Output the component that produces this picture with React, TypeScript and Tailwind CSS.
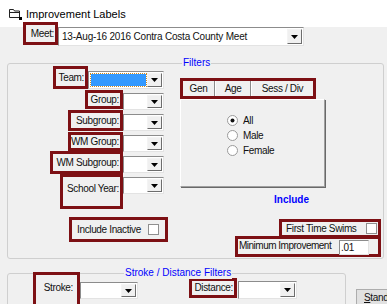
import React from "react";

const RED = "border-[3px] border-[#7d1014] bg-[#f0f0f0] whitespace-nowrap";

function Arrow() {
  return (
    <svg width="7" height="4" viewBox="0 0 7 4">
      <polygon points="0,0 7,0 3.5,4" fill="#000" />
    </svg>
  );
}

function Combo({
  className = "",
  text = "",
  selected = false,
}: {
  className?: string;
  text?: string;
  selected?: boolean;
}) {
  return (
    <div
      className={`flex shrink-0 bg-white border border-t-[#8c8c8c] border-l-[#8c8c8c] border-r-[#e3e3e3] border-b-[#e3e3e3] p-[1px] ${className}`}
    >
      <div className="flex-1 min-w-0 flex items-center overflow-hidden">
        {selected ? (
          <div className="w-full h-full p-[1px]">
            <div className="h-full bg-[#3399ff] outline-1 outline-dotted outline-[#d08a20]" />
          </div>
        ) : (
          <span className="pl-[2px] whitespace-nowrap">{text}</span>
        )}
      </div>
      <div className="w-[15px] shrink-0 bg-[#f0f0f0] border border-t-[#f4f4f4] border-l-[#f4f4f4] border-r-[#6d6d6d] border-b-[#6d6d6d] flex items-center justify-center">
        <Arrow />
      </div>
    </div>
  );
}

function Check({ className = "" }: { className?: string }) {
  return (
    <div
      className={`w-[11px] h-[11px] shrink-0 bg-white border border-[#8f8f8f] ${className}`}
    />
  );
}

function Radio({ checked = false }: { checked?: boolean }) {
  return (
    <svg width="11" height="11" viewBox="0 0 11 11" className="shrink-0">
      <circle cx="5.5" cy="5.5" r="5" fill="#fff" stroke="#9a9a9a" />
      {checked && <circle cx="5.5" cy="5.5" r="2" fill="#111" />}
    </svg>
  );
}

function TitleIcon() {
  return (
    <svg width="14" height="12" viewBox="0 0 14 12" className="shrink-0">
      <path
        d="M1.5 1.5 H5.5 L6.5 3 H11.5 V9.5 H1.5 Z"
        fill="none"
        stroke="#222"
      />
      <path d="M1.5 4.5 H11.5" stroke="#222" />
      <rect x="11" y="9" width="3" height="3" fill="#000" />
    </svg>
  );
}

export default function App() {
  return (
    <div className="w-[387px] h-[304px] overflow-hidden bg-[#f0f0f0] text-[10px] leading-[12px] tracking-[-0.35px] text-[#111] whitespace-nowrap font-['Liberation_Sans',Arial,sans-serif]">
      {/* Title bar */}
      <div className="h-[27px] bg-white flex items-center pl-[8px] gap-[4px] text-[11px] tracking-normal text-black">
        <TitleIcon />
        <span>Improvement Labels</span>
      </div>

      {/* Meet row */}
      <div className="relative flex items-start -mt-[5px] ml-[23px]">
        <div className={`${RED} w-[35px] h-[23px] flex items-center justify-end pr-[1px]`}>
          Meet:
        </div>
        <Combo
          className="w-[246px] h-[19px] mt-[5px] tracking-[-0.2px]"
          text="13-Aug-16 2016 Contra Costa County Meet"
        />
      </div>

      {/* Filters group */}
      <div className="relative ml-[7px] mt-[17px] w-[377px] h-[196px] border border-[#cfcfcf] rounded-[3px] flex">
        <span className="absolute left-[174px] -top-[7px] px-[1px] bg-[#f0f0f0] text-[#0000ff] tracking-normal">
          Filters
        </span>

        {/* Left column */}
        <div className="w-[156px] shrink-0 pt-[2px] flex flex-col items-end">
          <div className="flex items-start">
            <div className={`${RED} w-[35px] h-[23px] flex items-center justify-end pr-[1px]`}>
              Team:
            </div>
            <Combo className="w-[76px] h-[18px] mt-[5px]" selected />
          </div>
          <div className="flex items-start mt-[1px]">
            <div className={`${RED} w-[38px] h-[19px] flex items-center justify-end pr-[1px]`}>
              Group:
            </div>
            <Combo className="w-[41px] h-[17px] mt-[3px]" />
          </div>
          <div className="flex items-start">
            <div className={`${RED} w-[55px] h-[21px] flex items-center justify-end pr-[1px]`}>
              Subgroup:
            </div>
            <Combo className="w-[41px] h-[17px] mt-[4px]" />
          </div>
          <div className="flex items-start mt-[1px]">
            <div className={`${RED} w-[55px] h-[19px] flex items-center justify-end pr-[1px]`}>
              WM Group:
            </div>
            <Combo className="w-[41px] h-[17px] mt-[3px]" />
          </div>
          <div className="flex items-start -mt-[1px]">
            <div className={`${RED} w-[73px] h-[23px] flex items-center justify-end pr-[1px]`}>
              WM Subgroup:
            </div>
            <Combo className="w-[41px] h-[17px] mt-[5px]" />
          </div>
          <div className="flex items-start">
            <div className={`${RED} w-[63px] h-[35px] flex items-start justify-end pt-[6px] pr-[1px]`}>
              School Year:
            </div>
            <Combo className="w-[41px] h-[17px] mt-[3px]" />
          </div>
          <div className={`${RED} self-start ml-[61px] mt-[8px] w-[99px] h-[25px] flex items-center pl-[5px]`}>
            <span>Include Inactive</span>
            <Check className="ml-auto mr-[6px]" />
          </div>
        </div>

        {/* Right column */}
        <div className="ml-[16px] w-[200px] shrink-0 pt-[14px] flex flex-col">
          <div className={`${RED} w-[136px] h-[21px] flex`}>
            <div className="w-[32px] flex items-center justify-center border-r border-r-[#8a8a8a]">
              Gen
            </div>
            <div className="w-[36px] flex items-center justify-center border-l border-l-white border-r border-r-[#8a8a8a]">
              Age
            </div>
            <div className="w-[62px] flex items-center justify-center border-l border-l-white">
              Sess / Div
            </div>
          </div>
          <div className="w-[145px] h-[88px] border border-t-white border-l-white border-r-[#a0a0a0] border-b-[#a0a0a0] shadow-[1px_1px_0_#696969] pt-[13px] pl-[46px] flex flex-col">
            <div className="flex items-center h-[15px] gap-[5px]">
              <Radio checked />
              <span>All</span>
            </div>
            <div className="flex items-center h-[15px] gap-[5px]">
              <Radio />
              <span>Male</span>
            </div>
            <div className="flex items-center h-[15px] gap-[5px]">
              <Radio />
              <span>Female</span>
            </div>
          </div>
          <div className="ml-[94px] mt-[7px] font-bold text-[#0000ff] tracking-normal">
            Include
          </div>
          <div className={`${RED} self-start ml-[99px] mt-[13px] w-[102px] h-[19px] flex items-center pl-[4px]`}>
            <span>First Time Swims</span>
            <Check className="ml-auto mr-[1px]" />
          </div>
          <div className={`${RED} self-start ml-[55px] -mt-[2px] w-[146px] h-[21px] flex items-start pt-[1px] pl-[1px]`}>
            <span className="tracking-[-0.5px]">Minimum Improvement</span>
            <div className="ml-auto mr-[9px] w-[30px] h-[15px] shrink-0 bg-white border border-t-[#8c8c8c] border-l-[#8c8c8c] border-r-[#e3e3e3] border-b-[#e3e3e3] flex items-center pl-[1px]">
              .01
            </div>
          </div>
        </div>
      </div>

      {/* Stroke / Distance row */}
      <div className="flex items-start mt-[14px]">
        <div className="relative ml-[7px] w-[339px] h-[40px] shrink-0 border border-[#cfcfcf] rounded-[3px] flex items-start">
          <span className="absolute left-[116px] -top-[7px] px-[1px] bg-[#f0f0f0] text-[#0000ff] tracking-normal">
            Stroke / Distance Filters
          </span>
          <div className={`${RED} ml-[25px] -mt-[2px] w-[47px] h-[40px] flex items-start justify-end pt-[7px] pr-[4px]`}>
            Stroke:
          </div>
          <Combo className="w-[58px] h-[17px] mt-[8px]" />
          <div className={`${RED} ml-[51px] mt-[4px] w-[48px] h-[20px] flex items-center justify-end pr-[1px]`}>
            Distance:
          </div>
          <Combo className="ml-[1px] w-[59px] h-[18px] mt-[7px]" />
        </div>
        <div className="ml-[10px] mt-[16px] w-[40px] h-[22px] shrink-0 bg-[#e1e1e1] border border-[#adadad] flex items-start pt-[2px] pl-[7px] overflow-hidden">
          <span>
            <span className="underline">S</span>tandard
          </span>
        </div>
      </div>
    </div>
  );
}
